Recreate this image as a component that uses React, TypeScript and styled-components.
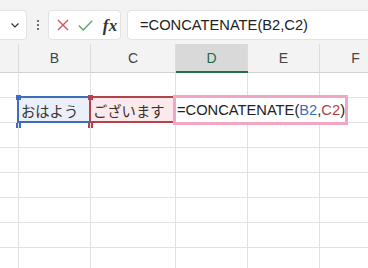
import React from "react";
import styled, { createGlobalStyle } from "styled-components";

const Global = createGlobalStyle`
  html, body { margin: 0; padding: 0; background: #ffffff; overflow: hidden; }
  body { font-family: "Liberation Sans", Arial, sans-serif; }
`;

const Page = styled.div`
  width: 368px;
  height: 268px;
  overflow: hidden;
  background: #ffffff;
`;

const TopBar = styled.div`
  display: flex;
  align-items: center;
  height: 44px;
  padding: 10px 0 4px 0;
  box-sizing: border-box;
  background: #f3f3f3;
`;

const Box = styled.div`
  height: 30px;
  box-sizing: border-box;
  background: #ffffff;
  border: 1px solid #e2e2e2;
  border-radius: 4px;
  display: flex;
  align-items: center;
`;

const NameBox = styled(Box)`
  width: 40px;
  margin-left: -13px;
  justify-content: flex-end;
  padding-right: 7px;
`;

const Dots = styled.div`
  margin-left: 10px;
  display: flex;
  flex-direction: column;
  gap: 2px;
  span {
    width: 2px;
    height: 2px;
    background: #444;
    border-radius: 1px;
  }
`;

const ButtonGroup = styled(Box)`
  margin-left: 9px;
  width: 73px;
  padding-left: 6px;
`;

const IconSlot = styled.div<{ $w: number }>`
  width: ${(p) => p.$w}px;
  display: flex;
  align-items: center;
  justify-content: center;
`;

const Fx = styled.span`
  font-family: "Liberation Serif", "Times New Roman", serif;
  font-style: italic;
  font-weight: bold;
  font-size: 17px;
  color: #333;
  letter-spacing: 0.5px;
  line-height: 1;
`;

const FormulaInput = styled(Box)`
  margin-left: 6px;
  flex: 1;
  margin-right: -10px;
  padding-left: 12px;
  font-size: 14.7px;
  color: #222;
  white-space: nowrap;
`;

const Grid = styled.div`
  display: flex;
  flex-direction: column;
`;

const Row = styled.div<{ $header?: boolean }>`
  display: grid;
  grid-template-columns: 19px 72px 85px 72px 72px 72px;
  height: ${(p) => (p.$header ? 29 : 25)}px;
  background: ${(p) => (p.$header ? "#f3f3f3" : "#ffffff")};
`;

const HeadCell = styled.div<{ $selected?: boolean }>`
  position: relative;
  box-sizing: border-box;
  border-right: 1px solid #dcdcdc;
  border-bottom: 1px solid #d2d2d2;
  background: ${(p) => (p.$selected ? "#d9d9d9" : "transparent")};
  color: ${(p) => (p.$selected ? "#1e6b45" : "#454545")};
  font-size: 14px;
  display: flex;
  align-items: center;
  justify-content: center;
  &::after {
    content: "";
    display: ${(p) => (p.$selected ? "block" : "none")};
    position: absolute;
    left: 0;
    right: -1px;
    bottom: -1px;
    height: 2px;
    background: #217346;
  }
`;

const Cell = styled.div<{ $fill?: string }>`
  position: relative;
  box-sizing: border-box;
  border-right: 1px solid #e1e1e1;
  border-bottom: 1px solid #e1e1e1;
  background: ${(p) => p.$fill || "transparent"};
  font-family: "Noto Sans CJK JP", sans-serif;
  font-size: 14.3px;
  color: #333;
  display: flex;
  align-items: center;
  padding-left: 2px;
  white-space: nowrap;
`;

const RangeBox = styled.div<{ $color: string }>`
  position: absolute;
  left: -2px;
  top: -2px;
  right: -1px;
  bottom: -1px;
  border: 2px solid ${(p) => p.$color};
  pointer-events: none;
`;

const Handle = styled.div<{ $color: string; $pos: "top" | "bottom" }>`
  position: absolute;
  left: -3px;
  ${(p) => (p.$pos === "top" ? "top: -3px;" : "bottom: -6px;")}
  width: 5px;
  height: 5px;
  background: ${(p) => p.$color};
`;

const Editor = styled.div`
  position: absolute;
  left: -3px;
  top: -3px;
  height: 30px;
  box-sizing: border-box;
  border: 3px solid #f2a6c6;
  background: #ffffff;
  padding: 0 0 0 1px;
  display: flex;
  align-items: center;
  font-family: "Liberation Sans", Arial, sans-serif;
  font-size: 14.7px;
  color: #222;
  white-space: nowrap;
  z-index: 2;
`;

const Ref = styled.span<{ $color: string }>`
  color: ${(p) => p.$color};
`;

const BLUE = "#3e6dbb";
const RED = "#b3434b";

const Formula = () => (
  <>
    =CONCATENATE(<Ref $color={BLUE}>B2</Ref>,<Ref $color={RED}>C2</Ref>)
  </>
);

const cols = ["B", "C", "D", "E", "F"];

const EmptyRow = () => (
  <Row>
    <Cell />
    <Cell />
    <Cell />
    <Cell />
    <Cell />
    <Cell />
  </Row>
);

export default function App() {
  const emptyAfter = [3, 4, 5, 6, 7, 8];
  return (
    <Page>
      <Global />
      <TopBar>
        <NameBox>
          <svg width="8" height="5" viewBox="0 0 8 5">
            <polyline points="0.5,0.5 4,4 7.5,0.5" fill="none" stroke="#333" strokeWidth="1.2" />
          </svg>
        </NameBox>
        <Dots>
          <span />
          <span />
          <span />
        </Dots>
        <ButtonGroup>
          <IconSlot $w={16}>
            <svg width="12" height="12" viewBox="0 0 12 12">
              <path d="M1 1 L11 11 M11 1 L1 11" stroke="#d3575c" strokeWidth="1.4" fill="none" />
            </svg>
          </IconSlot>
          <IconSlot $w={31}>
            <svg width="15" height="11" viewBox="0 0 15 11">
              <polyline points="0.8,5.6 5.2,10 14.2,0.8" fill="none" stroke="#5aa56b" strokeWidth="1.4" />
            </svg>
          </IconSlot>
          <IconSlot $w={20}>
            <Fx>fx</Fx>
          </IconSlot>
        </ButtonGroup>
        <FormulaInput>=CONCATENATE(B2,C2)</FormulaInput>
      </TopBar>
      <Grid>
        <Row $header>
          <HeadCell />
          {cols.map((c) => (
            <HeadCell key={c} $selected={c === "D"}>
              {c}
            </HeadCell>
          ))}
        </Row>
        <EmptyRow />
        <Row>
          <Cell />
          <Cell $fill="#eaeff9">
            おはよう
            <RangeBox $color={BLUE} />
            <Handle $color={BLUE} $pos="top" />
            <Handle $color={BLUE} $pos="bottom" />
          </Cell>
          <Cell $fill="#fbe9eb">
            ございます
            <RangeBox $color={RED} />
            <Handle $color={RED} $pos="top" />
            <Handle $color={RED} $pos="bottom" />
          </Cell>
          <Cell>
            <Editor>
              <Formula />
            </Editor>
          </Cell>
          <Cell />
          <Cell />
        </Row>
        {emptyAfter.map((r) => (
          <EmptyRow key={r} />
        ))}
      </Grid>
    </Page>
  );
}
